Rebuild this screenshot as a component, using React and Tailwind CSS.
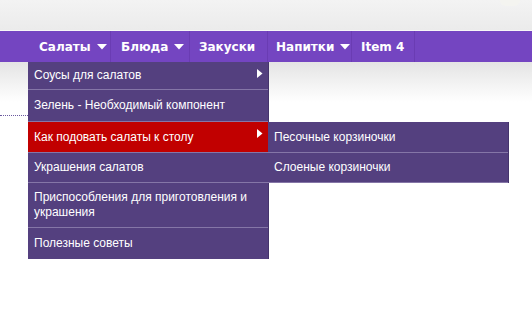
import React from 'react';

const navItems = [
  { label: 'Салаты', caret: true, cls: 'w-[83px] pl-[11px]' },
  { label: 'Блюда', caret: true, cls: 'w-[79px] pl-[10px]' },
  { label: 'Закуски', caret: false, cls: 'w-[78px] pl-[9px]' },
  { label: 'Напитки', caret: true, cls: 'w-[84px] pl-[8px]' },
  { label: 'Item 4', caret: false, cls: 'w-[63px] pl-[9px]' },
];

// row heights include the 1px divider
const menuRows = [
  { label: 'Соусы для салатов', arrow: true, h: 'h-[28px]' },
  { label: 'Зелень - Необходимый компонент', h: 'h-[32px]' },
  { label: 'Как подовать салаты к столу', arrow: true, active: true, h: 'h-[31px]' },
  { label: 'Украшения салатов', h: 'h-[30px]' },
  { label: 'Приспособления для приготовления и украшения', h: 'h-[45px]' },
  { label: 'Полезные советы', h: 'h-[31px]' },
];

const subRows = [
  { label: 'Песочные корзиночки', h: 'h-[31px]' },
  { label: 'Слоеные корзиночки', h: 'h-[30px]' },
];

function Caret() {
  return (
    <svg width="10" height="6" viewBox="0 0 10 6" className="ml-[6px] mt-[1px]">
      <path d="M0 0H10L5 5.5Z" fill="#fff" />
    </svg>
  );
}

function RightArrow() {
  return (
    <svg width="6" height="9" viewBox="0 0 6 9" className="absolute right-[5px] top-[7px]">
      <path d="M0 0L5.5 4.5L0 9Z" fill="#fff" />
    </svg>
  );
}

function SubMenu() {
  return (
    <div className="absolute left-full top-0 w-[241px] bg-[#54407f] border-r border-[#45346c]">
      {subRows.map((s) => (
        <div
          key={s.label}
          className={`${s.h} flex items-center px-[6px] text-[12px] text-white border-b border-[#8576a7]`}
        >
          {s.label}
        </div>
      ))}
    </div>
  );
}

function Dropdown() {
  return (
    <div className="absolute left-0 top-full w-[241px] bg-[#54407f] border-r border-[#45346c] z-10 font-['Liberation_Sans',Arial,sans-serif] font-normal">
      {menuRows.map((r, i) => (
        <div
          key={r.label}
          className={`relative ${r.h} flex items-center px-[6px] text-[12px] leading-[15px] text-white ${
            i < menuRows.length - 1 ? 'border-b border-[#8576a7]' : ''
          } ${r.active ? 'bg-[#c10000]' : ''}`}
        >
          <span className="pr-[14px]">{r.label}</span>
          {r.arrow && <RightArrow />}
          {r.active && <SubMenu />}
        </div>
      ))}
    </div>
  );
}

export default function App() {
  return (
    <div className="relative w-[532px] h-[316px] bg-white overflow-hidden font-['DejaVu_Sans',Verdana,sans-serif]">
      <div className="h-[31px] bg-gradient-to-b from-[#f3f3f3] to-[#ebebeb] border-b border-[#f7f7f7] relative">
        <div className="absolute right-[12px] -top-[6px] w-[20px] h-[12px] rounded-full bg-[#f4f4f0]" />
      </div>
      <nav className="h-[31px] bg-[#7445c1] flex pl-[28px]">
        {navItems.map((n, i) => (
          <div
            key={n.label}
            className={`relative h-full flex items-center border-r border-[#6a3cb3] ${n.cls} text-white text-[12px] font-bold`}
          >
            <span>{n.label}</span>
            {n.caret && <Caret />}
            {i === 0 && <Dropdown />}
          </div>
        ))}
      </nav>
      <div className="h-[40px] bg-gradient-to-b from-[#e4e4e4] to-white" />
      <div className="pt-[13px]">
        <div className="w-[60px] border-t border-dotted border-[#6b5aa0]" />
      </div>
    </div>
  );
}
